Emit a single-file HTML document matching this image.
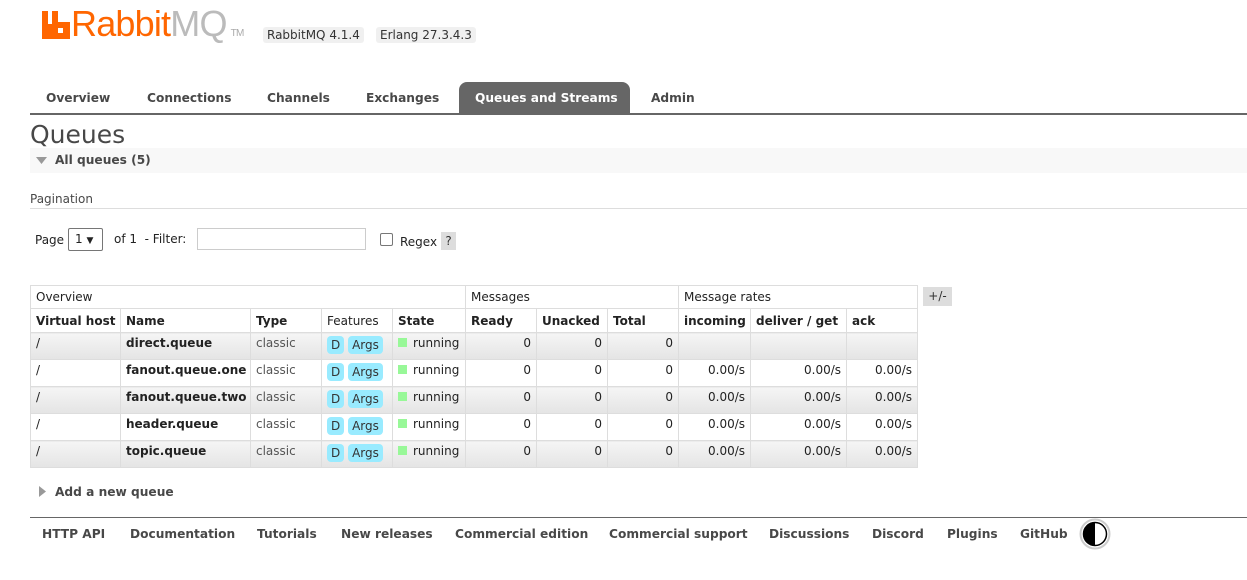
<!DOCTYPE html>
<html><head><meta charset="utf-8"><style>
*{margin:0;padding:0;box-sizing:border-box}
body{width:1247px;height:580px;background:#fff;font-family:"DejaVu Sans",Verdana,sans-serif;font-size:12px;color:#484848;position:relative;overflow:hidden}
.a{position:absolute;white-space:nowrap}
.b{font-weight:bold}
.tab{position:absolute;top:91px;font-weight:bold;font-size:12.2px;color:#484848}
.badge{position:absolute;top:27px;background:#f0f0f0;border-radius:3px;padding:1px 4px;font-size:12px;color:#333}
table{position:absolute;left:30px;top:285px;border-collapse:collapse;font-size:12px;table-layout:fixed;width:888px}
td,th{border:1px solid #ddd;padding:0 5px;text-align:left;white-space:nowrap;color:#222;overflow:hidden}
tr.g1 td{height:23px;font-weight:normal}
tr.h th{height:24px;font-weight:bold}
tr.r td{height:27px;vertical-align:top;padding-top:3px}
tr.gr td{background:linear-gradient(#f5f5f5,#e4e4e4)}
td.n{text-align:right}
.tag{display:inline-block;background:#99ebff;border-radius:4px;padding:2px 4px;margin-top:3px;font-size:12px;color:#333}
.run{display:inline-block;width:9px;height:9px;background:#98f898;margin-right:6px}
.ft{position:absolute;top:527px;font-weight:bold;font-size:12.2px;color:#484848}
</style></head><body>
<svg class="a" style="left:42px;top:11px" width="28" height="28" viewBox="0 0 28 28"><path d="M0 0h6v13h4V0h6v11h12v17H0z" fill="#f60"/><rect x="16" y="17" width="5" height="5" fill="#fff"/></svg>
<div class="a" style="left:71px;top:3px;font-family:'Liberation Sans',sans-serif;font-size:36px;letter-spacing:-0.8px"><span style="color:#f60">Rabbit</span><span style="color:#bbb">MQ</span><span style="color:#aaa;font-size:10px;margin-left:4px">TM</span></div>
<div class="badge" style="left:263px">RabbitMQ 4.1.4</div>
<div class="badge" style="left:376px">Erlang 27.3.4.3</div>

<div class="tab" style="left:46px">Overview</div>
<div class="tab" style="left:147px">Connections</div>
<div class="tab" style="left:267px">Channels</div>
<div class="tab" style="left:366px">Exchanges</div>
<div class="a" style="left:459px;top:82px;width:171px;height:32px;background:#666;border-radius:8px 8px 0 0"></div>
<div class="tab" style="left:475px;color:#fff">Queues and Streams</div>
<div class="tab" style="left:651px">Admin</div>
<div class="a" style="left:30px;top:113px;width:1217px;height:2px;background:#666"></div>

<div class="a" style="left:30px;top:120px;font-size:25px;color:#484848">Queues</div>
<div class="a" style="left:30px;top:148px;width:1217px;height:25px;background:#f8f8f8"></div>
<svg class="a" style="left:36px;top:157px" width="11" height="7"><path d="M0 0h11L5.5 7z" fill="#999"/></svg>
<div class="a b" style="left:55px;top:153px;font-size:12.2px">All queues (5)</div>

<div class="a" style="left:30px;top:192px">Pagination</div>
<div class="a" style="left:30px;top:208px;width:1217px;height:1px;background:#ddd"></div>
<div class="a" style="left:35px;top:233px;color:#222">Page</div>
<div class="a" style="left:68px;top:228px;width:35px;height:23px;border:1px solid #767676;border-radius:2px;padding:3px 0 0 6px;color:#222">1 <span style="font-size:9px">&#9660;</span></div>
<div class="a" style="left:114px;top:232px;color:#222">of 1 &nbsp;- Filter:</div>
<div class="a" style="left:197px;top:228px;width:169px;height:22px;border:1px solid #ccc"></div>
<div class="a" style="left:380px;top:233px;width:13px;height:13px;border:1px solid #777;border-radius:2px"></div>
<div class="a" style="left:400px;top:235px;color:#222">Regex</div>
<div class="a" style="left:441px;top:232px;width:15px;height:18px;background:#ddd;text-align:center;padding-top:2px;color:#333">?</div>

<table>
<colgroup><col style="width:90px"><col style="width:130px"><col style="width:71px"><col style="width:71px"><col style="width:73px"><col style="width:71px"><col style="width:71px"><col style="width:71px"><col style="width:72px"><col style="width:96px"><col style="width:71px"></colgroup>
<tr class="g1"><td colspan="5">Overview</td><td colspan="3">Messages</td><td colspan="3">Message rates</td></tr>
<tr class="h"><th>Virtual host</th><th>Name</th><th>Type</th><th style="font-weight:normal">Features</th><th>State</th><th>Ready</th><th>Unacked</th><th>Total</th><th>incoming</th><th>deliver / get</th><th>ack</th></tr>
<tr class="r gr"><td>/</td><td class="b">direct.queue</td><td style="color:#555">classic</td><td style="padding-top:0"><span class="tag">D</span> <span class="tag">Args</span></td><td><span class="run"></span>running</td><td class="n">0</td><td class="n">0</td><td class="n">0</td><td></td><td></td><td></td></tr>
<tr class="r"><td>/</td><td class="b">fanout.queue.one</td><td style="color:#555">classic</td><td style="padding-top:0"><span class="tag">D</span> <span class="tag">Args</span></td><td><span class="run"></span>running</td><td class="n">0</td><td class="n">0</td><td class="n">0</td><td class="n">0.00/s</td><td class="n">0.00/s</td><td class="n">0.00/s</td></tr>
<tr class="r gr"><td>/</td><td class="b">fanout.queue.two</td><td style="color:#555">classic</td><td style="padding-top:0"><span class="tag">D</span> <span class="tag">Args</span></td><td><span class="run"></span>running</td><td class="n">0</td><td class="n">0</td><td class="n">0</td><td class="n">0.00/s</td><td class="n">0.00/s</td><td class="n">0.00/s</td></tr>
<tr class="r"><td>/</td><td class="b">header.queue</td><td style="color:#555">classic</td><td style="padding-top:0"><span class="tag">D</span> <span class="tag">Args</span></td><td><span class="run"></span>running</td><td class="n">0</td><td class="n">0</td><td class="n">0</td><td class="n">0.00/s</td><td class="n">0.00/s</td><td class="n">0.00/s</td></tr>
<tr class="r gr"><td>/</td><td class="b">topic.queue</td><td style="color:#555">classic</td><td style="padding-top:0"><span class="tag">D</span> <span class="tag">Args</span></td><td><span class="run"></span>running</td><td class="n">0</td><td class="n">0</td><td class="n">0</td><td class="n">0.00/s</td><td class="n">0.00/s</td><td class="n">0.00/s</td></tr>
</table>
<div class="a" style="left:923px;top:287px;width:29px;height:19px;background:#ddd;text-align:center;padding-top:2px;color:#333">+/-</div>

<svg class="a" style="left:39px;top:486px" width="7" height="11"><path d="M0 0v11l7-5.5z" fill="#999"/></svg>
<div class="a b" style="left:55px;top:485px;font-size:12.2px">Add a new queue</div>

<div class="a" style="left:30px;top:517px;width:1217px;height:1px;background:#666"></div>
<div class="ft" style="left:42px">HTTP API</div>
<div class="ft" style="left:130px">Documentation</div>
<div class="ft" style="left:257px">Tutorials</div>
<div class="ft" style="left:341px">New releases</div>
<div class="ft" style="left:455px">Commercial edition</div>
<div class="ft" style="left:609px">Commercial support</div>
<div class="ft" style="left:769px">Discussions</div>
<div class="ft" style="left:872px">Discord</div>
<div class="ft" style="left:947px">Plugins</div>
<div class="ft" style="left:1020px">GitHub</div>
<svg class="a" style="left:1079px;top:518px" width="32" height="32"><circle cx="16" cy="16" r="14.5" fill="#fff" stroke="#ccc" stroke-width="2"/><circle cx="16" cy="16" r="11.5" fill="#fff" stroke="#000" stroke-width="1.5"/><path d="M16 4.5a11.5 11.5 0 0 0 0 23z" fill="#000"/></svg>
</body></html>
